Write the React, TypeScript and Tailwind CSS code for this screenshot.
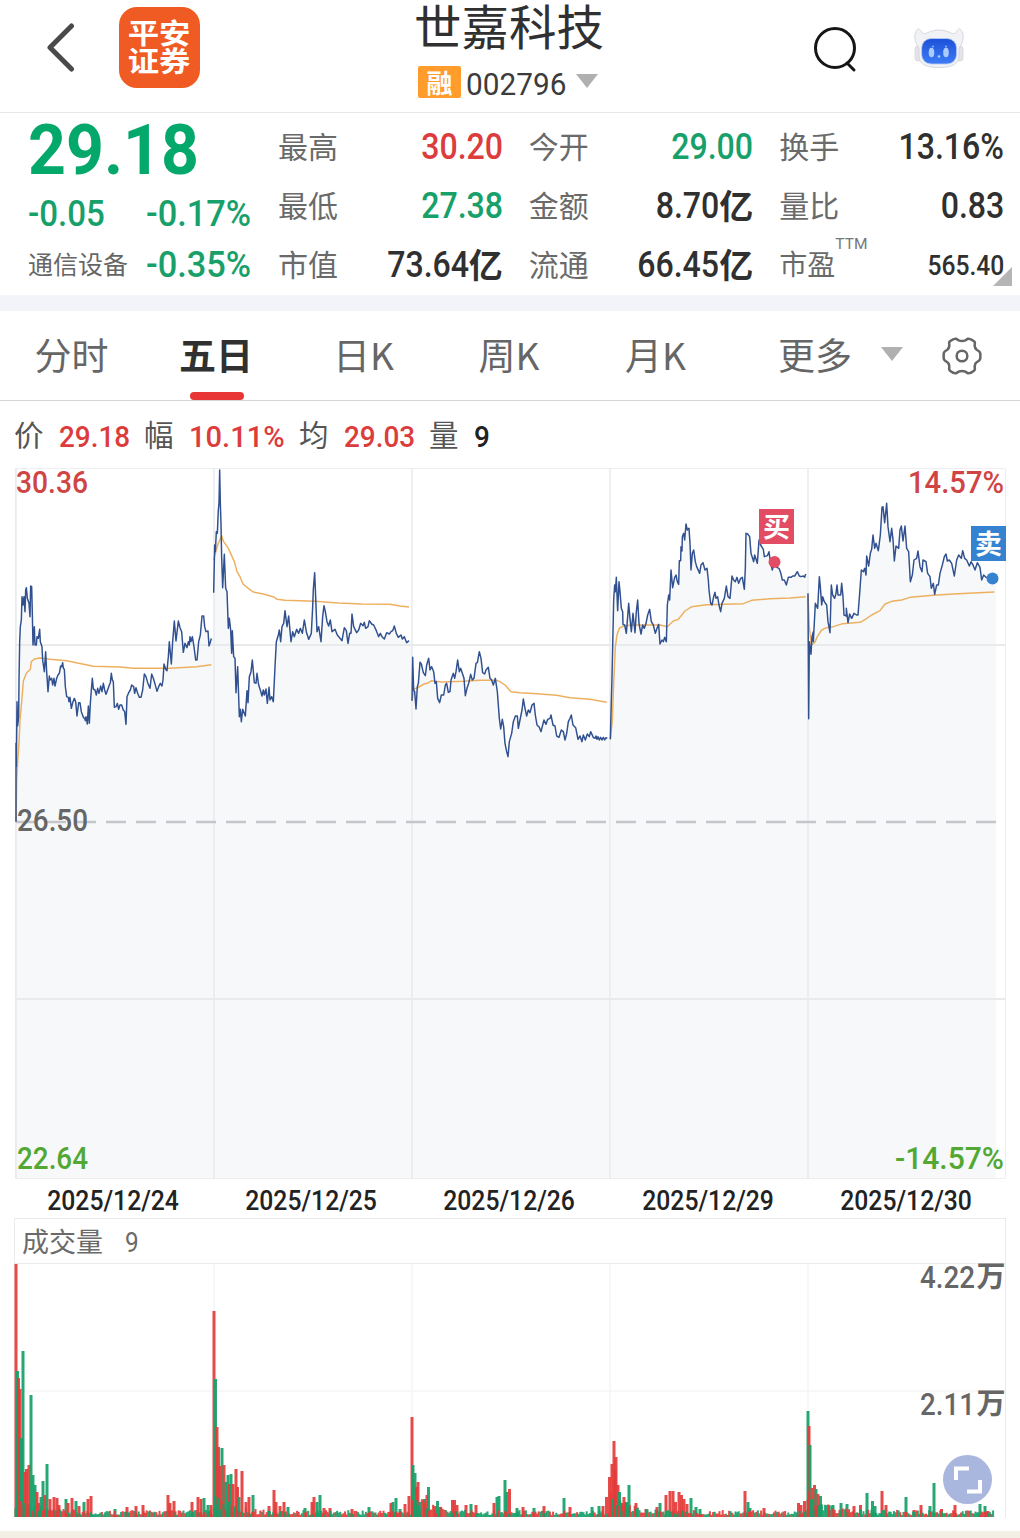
import clsx from 'clsx';

const CJK = "font-['Noto_Sans_CJK_SC',sans-serif]";
const NUM = "font-[Roboto,'Noto_Sans_CJK_SC',sans-serif]";

type Tone = 'red' | 'green' | 'dark';

const toneClass: Record<Tone, string> = {
  red: 'text-[#dc3c3c]',
  green: 'text-[#18a06b]',
  dark: 'text-[#303030]',
};

interface Stat {
  label: string;
  value: string;
  unit?: string;
  tone: Tone;
  small?: boolean;
  sup?: string;
}

const stats: Stat[] = [
  { label: '最高', value: '30.20', tone: 'red' },
  { label: '今开', value: '29.00', tone: 'green' },
  { label: '换手', value: '13.16%', tone: 'dark' },
  { label: '最低', value: '27.38', tone: 'green' },
  { label: '金额', value: '8.70', unit: '亿', tone: 'dark' },
  { label: '量比', value: '0.83', tone: 'dark' },
  { label: '市值', value: '73.64', unit: '亿', tone: 'dark' },
  { label: '流通', value: '66.45', unit: '亿', tone: 'dark' },
  { label: '市盈', value: '565.40', tone: 'dark', small: true, sup: 'TTM' },
];

// Points are in thirds of a pixel, relative to each day's own origin
const days = [
  {
    date: '2025/12/24',
    dx: 0,
    dy: -8,
    end: 642,
    price:
      '48,1085 48,850 49,920 51,725 53,797 56,770 57,660 59,545 61,500 64,480 66,410 69,435 72,410 75,455 77,390 79,383 82,415 87,430 90,470 92,378 95,380 97,460 99,555 103,500 105,555 109,555 111,530 115,535 119,508 121,545 126,560 128,600 133,635 137,575 140,635 144,695 148,648 150,660 155,655 158,675 162,655 165,678 170,655 174,645 178,640 182,618 185,620 188,608 190,625 193,628 196,680 200,710 205,712 207,725 210,712 214,745 219,725 223,715 227,725 231,768 236,728 240,728 244,755 250,772 254,775 256,782 258,770 262,792 265,738 268,790 271,730 274,690 277,655 280,687 285,690 289,705 293,685 297,700 302,678 306,695 310,670 314,690 318,703 322,692 328,675 331,668 334,640 337,660 340,665 343,742 348,740 352,730 356,748 360,735 365,735 370,750 374,755 378,793 381,710 386,698 391,690 395,675 401,680 404,700 408,683 413,700 418,712 423,712 428,690 433,642 438,650 443,668 450,685 455,642 460,655 464,668 471,694 476,680 481,670 486,678 489,660 492,612 497,628 501,632 505,590 508,545 514,612 518,545 523,483 528,543 535,483 540,503 545,515 550,577 555,550 561,563 565,545 568,555 570,530 573,545 577,530 582,560 587,600 591,600 596,545 601,525 606,468 611,468 614,500 618,515 624,513 627,558 630,550 634,535',
    avg: '48,1085 50,960 54,890 57,850 60,780 66,715 70,663 79,640 91,628 94,605 103,597 120,594 150,598 200,602 280,619 360,621 400,625 510,625 590,620 634,614',
  },
  {
    date: '2025/12/25',
    dx: 205,
    dy: -8,
    end: 621,
    price:
      '26,398 29,255 31,275 34,215 37,220 40,150 42,130 44,30 46,130 48,190 50,290 53,383 58,283 62,385 66,395 70,505 73,475 77,510 80,580 82,512 86,590 90,595 93,698 98,620 100,680 103,770 106,748 109,785 113,748 121,768 126,692 129,728 133,650 138,635 142,600 148,668 153,670 156,640 161,675 166,690 171,708 175,690 178,705 183,687 187,730 192,682 195,720 200,710 205,725 210,620 214,545 220,525 223,510 227,545 231,500 236,490 240,452 246,500 251,468 258,545 263,515 268,530 275,508 281,520 286,505 292,520 298,480 304,515 311,538 319,520 323,440 325,388 329,338 332,410 336,515 341,500 348,545 353,470 357,437 361,455 366,485 371,498 376,480 381,515 390,508 397,525 405,535 411,542 418,503 424,512 429,550 434,520 438,520 441,462 446,500 455,518 461,510 467,490 474,497 478,487 482,505 489,500 493,482 500,492 506,495 514,512 521,530 526,520 531,530 538,537 545,518 553,522 558,515 563,512 568,498 574,520 580,532 588,525 592,537 598,530 605,548 612,542',
    avg: '26,300 34,268 40,250 50,228 56,245 70,265 88,305 96,335 105,350 114,372 130,385 145,396 175,402 207,411 216,418 240,421 330,424 400,429 470,432 555,433 585,438 612,441',
  },
  {
    date: '2025/12/26',
    dx: 400,
    dy: 162,
    end: 630,
    price:
      '36,212 38,82 41,180 44,185 48,237 52,170 55,160 60,97 64,102 70,128 76,137 80,105 86,85 90,120 95,110 101,125 105,160 109,155 113,205 119,218 124,195 131,195 136,165 140,160 145,187 150,185 153,150 160,130 164,145 168,125 173,90 178,125 182,115 187,130 192,145 196,197 201,175 206,160 212,133 217,150 222,145 228,100 232,98 238,65 243,85 248,128 254,132 258,120 265,112 270,145 275,150 280,165 286,145 292,185 298,265 302,297 307,268 311,290 315,340 320,365 324,380 328,335 335,310 340,275 346,258 352,258 355,295 360,270 366,240 370,207 375,235 380,258 385,240 390,248 396,225 402,220 406,255 411,285 418,292 423,305 428,285 432,270 438,283 443,268 450,265 453,255 459,285 465,288 470,318 477,322 484,300 490,305 495,330 500,310 505,275 510,265 514,255 519,285 527,293 534,328 540,318 546,335 550,315 556,330 562,312 568,320 572,305 580,322 585,325 588,318 591,328 594,320 598,330 602,322 606,330 610,322 614,330 618,323 622,325',
    avg: '36,212 42,176 50,175 72,162 82,160 95,152 125,156 190,154 240,151 290,151 300,155 315,165 333,185 360,188 410,191 470,196 510,203 570,208 620,217',
  },
  {
    date: '2025/12/29',
    dx: 600,
    dy: 22,
    end: 624,
    price:
      '31,748 33,670 36,560 38,470 41,330 44,285 46,305 49,262 53,362 57,275 60,305 64,355 68,365 69,403 74,405 79,430 83,380 86,340 90,385 94,425 99,370 105,428 109,365 113,330 117,400 123,432 128,405 133,415 138,400 143,375 149,358 154,395 160,405 166,430 171,415 176,403 180,462 186,450 190,455 194,442 199,455 202,345 206,315 209,330 213,240 218,293 224,262 228,255 232,275 236,283 238,212 242,212 243,170 246,183 247,140 251,130 254,150 258,102 262,120 267,115 270,160 273,240 277,190 281,180 286,215 290,230 299,250 303,225 309,218 315,240 321,235 325,270 327,300 332,340 336,345 341,320 345,307 348,325 353,320 357,345 362,365 366,340 373,325 379,288 384,320 390,325 396,258 401,270 406,275 411,262 416,280 422,265 427,262 433,298 436,235 438,130 443,132 449,140 453,190 461,215 464,195 472,220 477,150 482,165 490,178 493,200 502,197 507,185 511,215 517,240 523,215 530,232 537,235 542,248 547,270 553,270 559,285 565,262 573,262 578,258 584,258 592,245 598,258 603,260 610,258 614,262 617,252',
    avg: '31,748 37,690 41,580 46,470 51,435 58,415 70,408 100,405 180,405 202,410 220,393 235,388 255,363 275,350 320,344 430,341 455,331 510,326 570,324 617,320',
  },
  {
    date: '2025/12/30',
    dx: 800,
    dy: 12,
    end: 588,
    price:
      '24,340 26,716 28,485 30,500 33,523 36,470 40,455 40,485 46,370 53,385 58,290 61,320 65,375 68,350 73,365 80,375 84,425 90,458 94,315 98,345 104,355 108,340 111,315 114,345 122,345 125,310 129,350 132,405 139,408 139,385 144,428 149,402 155,415 162,400 170,405 174,405 179,340 184,270 190,275 194,265 198,285 200,228 206,258 211,220 215,208 219,165 224,205 228,190 235,212 241,165 246,82 249,80 254,128 260,70 264,140 270,185 275,145 279,178 283,243 288,198 296,205 300,150 304,138 309,183 315,138 320,205 326,215 331,305 337,285 342,240 350,235 354,213 360,260 366,275 369,240 378,245 383,280 390,290 394,325 400,310 404,343 410,315 415,315 420,280 427,255 433,230 438,222 442,243 448,240 455,250 463,288 470,240 476,225 484,235 488,212 494,235 500,240 508,258 513,245 519,255 525,270 532,248 540,262 545,300 551,285 558,292 575,295',
    avg: '24,345 28,440 34,495 44,488 52,470 65,450 80,443 100,440 128,431 180,427 196,418 215,405 240,392 255,372 275,364 305,360 330,352 400,346 460,342 520,339 583,336',
  },
];

// [x, height, colour]
type Bar = [number, number, 'r' | 'g'];

const peaks: Bar[] = [
  [16, 253, 'r'], [17.5, 146, 'g'], [18.5, 139, 'r'], [20, 128, 'r'], [21.5, 79, 'g'], [23, 166, 'g'], [25, 45, 'r'], [26.5, 48, 'r'], [29, 52, 'r'], [31, 122, 'g'], [33, 42, 'g'], [35, 32, 'g'], [37, 25, 'r'], [38.5, 14, 'r'], [41, 20, 'g'], [43, 36, 'g'], [45, 22, 'r'], [47, 53, 'g'], [50, 18, 'r'], [54, 20, 'r'], [57, 19, 'r'], [59, 12, 'r'], [66, 18, 'g'], [68, 14, 'r'], [72, 19, 'r'], [76, 16, 'g'], [79, 11, 'r'], [84, 15, 'g'], [88, 18, 'r'], [91, 21, 'r'], [115, 8, 'g'], [127, 10, 'r'], [136, 11, 'r'], [143, 12, 'r'], [168, 22, 'r'], [170, 14, 'r'], [174, 16, 'r'], [192, 15, 'r'], [198, 20, 'r'], [201, 18, 'r'], [204, 19, 'g'], [208, 12, 'g'], [211, 12, 'r'],
  [214, 206, 'r'], [215.5, 138, 'g'], [217, 90, 'r'], [218.5, 70, 'r'], [222, 69, 'g'], [220, 51, 'r'], [224, 52, 'r'], [226, 35, 'g'], [228, 42, 'g'], [229.5, 33, 'r'], [231, 43, 'g'], [233, 33, 'r'], [236, 48, 'r'], [237.5, 30, 'r'], [239, 20, 'g'], [242, 46, 'r'], [246, 15, 'r'], [249, 20, 'r'], [253, 22, 'g'], [269, 11, 'r'], [274, 27, 'r'], [276, 15, 'r'], [280, 11, 'r'], [284, 15, 'r'], [288, 10, 'g'], [305, 9, 'g'], [312, 15, 'r'], [314, 20, 'r'], [317, 15, 'g'], [320, 22, 'g'], [324, 9, 'r'], [330, 9, 'r'], [352, 8, 'r'], [369, 10, 'g'], [391, 14, 'r'], [393, 15, 'g'], [396, 19, 'g'], [400, 8, 'g'], [405, 13, 'r'], [409, 21, 'r'],
  [412, 100, 'r'], [413, 52, 'g'], [415, 44, 'g'], [416.5, 30, 'r'], [418, 35, 'r'], [420, 15, 'g'], [424.5, 18, 'g'], [427, 22, 'r'], [428.5, 30, 'g'], [435, 11, 'r'], [437.5, 16, 'g'], [440, 10, 'g'], [452.5, 17, 'r'], [454.5, 17, 'r'], [457, 12, 'r'], [466, 12, 'r'], [471, 13, 'g'], [476, 12, 'r'], [494, 14, 'r'], [497, 20, 'g'], [499, 21, 'g'], [505, 37, 'g'], [507, 25, 'g'], [509.5, 28, 'r'], [517, 9, 'g'], [523, 10, 'r'], [534, 9, 'g'], [544, 11, 'r'], [564, 19, 'g'], [570, 10, 'r'], [592, 10, 'g'], [599, 11, 'g'], [603, 11, 'r'], [606.5, 20, 'r'],
  [609.5, 40, 'r'], [612, 53, 'r'], [614, 76, 'r'], [616, 60, 'r'], [615, 47, 'r'], [618, 32, 'r'], [619.5, 25, 'g'], [622, 14, 'r'], [624, 20, 'r'], [626.5, 15, 'g'], [629, 32, 'g'], [636, 14, 'r'], [646, 8, 'r'], [657, 10, 'r'], [660, 14, 'g'], [666, 22, 'r'], [670, 26, 'r'], [673, 26, 'r'], [675.5, 15, 'r'], [679, 25, 'r'], [681.5, 22, 'r'], [684, 18, 'r'], [687, 13, 'r'], [691, 19, 'g'], [696, 10, 'g'], [700, 8, 'g'], [745, 26, 'r'], [748, 15, 'g'], [750, 9, 'g'], [764, 9, 'r'], [798.5, 14, 'r'], [801, 12, 'r'], [804.5, 16, 'r'],
  [808, 106, 'g'], [809, 91, 'r'], [810, 72, 'g'], [812, 29, 'r'], [814.5, 32, 'r'], [816, 28, 'g'], [818, 23, 'r'], [820.5, 21, 'g'], [829, 12, 'g'], [833, 12, 'g'], [841, 14, 'g'], [847, 13, 'g'], [854, 11, 'r'], [860.5, 12, 'r'], [867, 24, 'g'], [872.5, 16, 'g'], [875, 11, 'g'], [882, 26, 'r'], [886, 12, 'r'], [906, 20, 'g'], [914, 7, 'r'], [921, 12, 'r'], [930, 11, 'g'], [934, 34, 'g'], [941.5, 8, 'r'], [955, 12, 'r'], [980, 13, 'g'], [985, 11, 'g'], [988, 6, 'r'],
];

// Low minute-by-minute turnover between the peaks
const baseBars: Bar[] = Array.from({ length: 612 }, (_, i) => {
  const x = 16 + i * 1.6;
  const n = Math.abs(Math.sin(i * 12.9898) * 43758.5453) % 1;
  const m = Math.abs(Math.sin(i * 78.233) * 12543.123) % 1;
  const sinceOpen = (x - 16) % 198;
  const h = 2 + n * 5 + 14 * Math.exp(-sinceOpen / 16) * (0.5 + n);
  return [x, h, m > 0.5 ? 'r' : 'g'] as Bar;
}).filter((b) => b[0] < 995);

const gridX = [214, 412, 610, 808];

function Logo() {
  return (
    <div className={clsx(CJK, 'ml-11 flex h-[81px] w-[81px] flex-col items-center justify-center rounded-[18px] bg-[#f05a23] pb-[3px] text-[28px] leading-[28px] font-bold text-white')}>
      <span className="scale-x-[1.12]">平安</span>
      <span className="scale-x-[1.12]">证券</span>
    </div>
  );
}

function Robot() {
  return (
    <svg className="h-[42px] w-[50px]" viewBox="0 0 50 42">
      <defs>
        <linearGradient id="visor" x1="0" y1="0" x2="0" y2="1">
          <stop offset="0" stopColor="#1c50d8" />
          <stop offset="1" stopColor="#3f7cf5" />
        </linearGradient>
      </defs>
      <rect x="1" y="18" width="7" height="15" rx="3" fill="#e6e3e8" stroke="#d2d0d8" strokeWidth="0.7" />
      <rect x="42" y="18" width="7" height="15" rx="3" fill="#e6e3e8" stroke="#d2d0d8" strokeWidth="0.7" />
      <path
        d="M5 20C1 15-1 7 3 2c1-2 3-1 4 1 1 3 3 3 6 2 8-4 16-4 24 0 3 1 5 1 6-2 1-2 3-3 4-1 4 5 2 13-2 18v8c0 8-7 11.500-20 11.500S5 36 5 28z"
        fill="#f1f2f6"
        stroke="#d3d5dd"
        strokeWidth="0.9"
      />
      <rect x="7.6" y="10.5" width="35" height="25.5" rx="9.5" fill="url(#visor)" stroke="#b9cdf7" strokeWidth="0.8" />
      <ellipse cx="17.5" cy="24.5" rx="2.8" ry="4.8" fill="#a9cbff" />
      <ellipse cx="32" cy="24.5" rx="2.8" ry="4.8" fill="#a9cbff" />
      <circle cx="19" cy="18.5" r="1" fill="#8eb4fb" />
      <circle cx="32" cy="18.5" r="1" fill="#8eb4fb" />
      <circle cx="25" cy="28.5" r="1.3" fill="#a9cbff" />
    </svg>
  );
}

function Gear() {
  return (
    <svg className="h-10 w-10" viewBox="-60 -60 120 120" fill="none" stroke="#666" strokeWidth="7.500" strokeLinejoin="round">
      <path d="M-10-47Q0-43 10-47L18-52Q25-53 36-44Q40-41 38-33Q38-22 45-18Q55-13 55-7V7Q55 13 45 18Q38 22 38 33Q40 41 36 44Q25 53 18 52L10 47Q0 43-10 47L-18 52Q-25 53-36 44Q-40 41-38 33Q-38 22-45 18Q-55 13-55 7V-7Q-55-13-45-18Q-38-22-38-33Q-40-41-36-44Q-25-53-18-52Z" />
      <circle r="16" />
    </svg>
  );
}

function Caret() {
  return (
    <svg className="h-[14px] w-[22px]" viewBox="0 0 22 14">
      <path d="M0 0h22L11 14z" fill="#b0b0b0" />
    </svg>
  );
}

function Header() {
  return (
    <div className="flex h-[113px] border-b border-[#e8e8e8]">
      <div className="flex w-[320px] items-center pt-[6px] pb-[24px] pl-[46px]">
        <svg className="mt-[2px] h-[50px] w-[29px]" viewBox="0 0 29 50" fill="none" stroke="#4a4a4a" strokeWidth="5" strokeLinecap="round" strokeLinejoin="round">
          <path d="M25.500 3L4 24.500L25.500 46" />
        </svg>
        <Logo />
      </div>
      <div className="flex w-[378px] flex-col items-center">
        <div className={clsx(CJK, 'h-[66px] text-[47.500px] leading-[49px] whitespace-nowrap text-[#303030]')}>世嘉科技</div>
        <div className="flex h-8 items-center pr-[2px]">
          <span className={clsx(CJK, 'flex h-8 w-[43px] items-center justify-center rounded-[2px] bg-[#ff9c2b] pb-px text-[26px] leading-none font-bold text-white')}>融</span>
          <span className={clsx(NUM, 'ml-[5px] w-[101px] origin-left scale-x-[0.96] pt-1 text-[31px] leading-none text-[#3c3c3c]')}>002796</span>
          <span className="ml-[9px] flex pb-[2px]">
            <Caret />
          </span>
        </div>
      </div>
      <div className="flex flex-1 items-start pt-[26px] pl-[115px]">
        <svg className="h-[48px] w-[46px]" viewBox="0 0 46 48" fill="none" stroke="#161616" strokeWidth="3" strokeLinecap="round">
          <circle cx="22" cy="22" r="19.500" />
          <path d="M34 37l7 7" />
        </svg>
        <div className="ml-[55px] pt-[2px]">
          <Robot />
        </div>
      </div>
    </div>
  );
}

function Quote() {
  return (
    <div className="relative flex h-[182px] pt-1">
      <div className={clsx(NUM, 'w-[278px] pl-7 font-medium')}>
        <div className="h-[66px] origin-left scale-x-[0.945] text-[70px] leading-[66px] font-bold text-[#05a86b]">29.18</div>
        <div className="flex h-[58px] items-center pt-1 text-[36px] leading-none text-[#18a06b]">
          <span className="w-[118px] origin-left scale-x-[0.92]">-0.05</span>
          <span className="origin-left scale-x-[0.955]">-0.17%</span>
        </div>
        <div className="flex h-[48px] items-center text-[36px] leading-none text-[#18a06b]">
          <span className={clsx(CJK, '-mt-[3px] w-[118px] text-[25px] font-normal whitespace-nowrap text-[#666]')}>通信设备</span>
          <span className="origin-left scale-x-[0.955]">-0.35%</span>
        </div>
      </div>
      <div className="grid h-[177px] w-[726px] grid-cols-3 gap-x-[26px]">
        {stats.map((s) => (
          <div key={s.label} className="flex h-[59px] items-center justify-between">
            <span className={clsx(CJK, 'flex pb-[3px] text-[30px] leading-none text-[#6a6a6a]')}>
              {s.sup ? <span className="text-[28px]">{s.label}</span> : s.label}
              {s.sup && <span className="-mt-[12px] font-[Roboto] text-[15.500px] leading-none text-[#777]">{s.sup}</span>}
            </span>
            <span className={clsx('flex items-center leading-none font-medium', toneClass[s.tone])}>
              <span className={clsx(NUM, 'origin-right scale-x-[0.88]', s.small ? 'pt-[3px] text-[28px]' : 'pt-[2px] text-[36.500px]')}>{s.value}</span>
              {s.unit && <span className={clsx(CJK, 'pb-[2px] text-[34px] font-bold')}>{s.unit}</span>}
            </span>
          </div>
        ))}
      </div>
      <svg className="absolute right-2 bottom-[9px] h-[19px] w-[19px]" viewBox="0 0 19 19">
        <path d="M19 0v19H0z" fill="#b5b5b5" />
      </svg>
    </div>
  );
}

function Tabs() {
  const tabs = [
    { name: '分时', width: 'w-[143px]' },
    { name: '五日', width: 'w-[146px]' },
    { name: '日K', width: 'w-[149px]' },
    { name: '周K', width: 'w-[142px]' },
    { name: '月K', width: 'w-[151px]' },
  ];
  return (
    <div className={clsx(CJK, 'flex h-[90px] items-stretch border-b border-[#d4d4d4] text-[37px] leading-none text-[#666]')}>
      {tabs.map((tab) => {
        const active = tab.name === '五日';
        return (
          <div key={tab.name} className={clsx('relative flex items-center justify-center pb-[3px]', tab.width, active && 'font-bold text-[#303030]')}>
            {tab.name}
            {active && <span className="absolute bottom-0 left-[47px] h-2 w-[54px] rounded-full bg-[#e83535]" />}
          </div>
        );
      })}
      <div className="flex w-[172px] items-center justify-end pb-[3px]">
        更多
        <span className="ml-[29px] flex">
          <Caret />
        </span>
      </div>
      <div className="ml-[39px] flex items-center">
        <Gear />
      </div>
    </div>
  );
}

function InfoRow() {
  const items = [
    { label: '价', value: '29.18', box: 'w-[130px]', squeeze: 'scale-x-[0.93]', red: true },
    { label: '幅', value: '10.11%', box: 'w-[155px]', squeeze: 'scale-x-[0.97]', red: true },
    { label: '均', value: '29.03', box: 'w-[130px]', squeeze: 'scale-x-[0.93]', red: true },
    { label: '量', value: '9', box: 'w-[80px]', squeeze: 'scale-x-[0.93]', red: false },
  ];
  return (
    <div className="flex h-[67px] items-center pl-[14px]">
      {items.map((item) => (
        <div key={item.label} className={clsx('flex items-center leading-none', item.box)}>
          <span className={clsx(CJK, 'mr-[15px] pb-px text-[29.500px] text-[#555]')}>{item.label}</span>
          <span className={clsx(NUM, 'origin-left pt-[5px] text-[30px] font-medium', item.squeeze, item.red ? 'text-[#dc3c3c]' : 'text-[#222]')}>{item.value}</span>
        </div>
      ))}
    </div>
  );
}

function Marker({ x, y, color, label }: { x: number; y: number; color: string; label: string }) {
  return (
    <g>
      <rect x={x} y={y} width="35" height="35" fill={color} />
      <text x={x + 17.5} y={y + 27.5} textAnchor="middle" fontSize="27" fontWeight="700" fill="#fff" className={CJK}>
        {label}
      </text>
    </g>
  );
}

function PriceChart() {
  return (
    <svg className="block h-[711px] w-[1020px] overflow-visible" viewBox="0 0 1020 711">
      {days.map((d) => {
        const scale = `translate(${d.dx} ${d.dy}) scale(0.33333)`;
        const first = d.price.split(',')[0];
        const floor = (711 - d.dy) * 3;
        return (
          <path key={d.date} transform={scale} d={`M${first},${floor} L${d.price} H${d.end} V${floor}Z`} fill="#f6f8fa" />
        );
      })}
      <g stroke="#e9eaec" strokeWidth="1.500">
        <path d="M15.500 .5H1005.500V710.500H15.500z" fill="none" stroke="#eeeeef" strokeWidth="1" />
        <path d="M15 177H1006M15 531H1006" strokeWidth="2" />
        {gridX.map((x) => (
          <path key={x} d={`M${x} 0V711`} />
        ))}
        <path d="M16 0V711" />
      </g>
      <path d="M16 354H996" stroke="#c4c6c9" strokeWidth="2.500" strokeDasharray="20 10" />
      {days.map((d) => (
        <g key={d.date} transform={`translate(${d.dx} ${d.dy}) scale(0.33333)`} fill="none" strokeLinejoin="round">
          <polyline points={d.avg} stroke="#edb060" strokeWidth="4.400" />
          <polyline points={d.price} stroke="#30508f" strokeWidth="4.400" />
        </g>
      ))}
      <Marker x={759} y={41} color="#e34d64" label="买" />
      <circle cx="774.500" cy="94" r="6" fill="#e34d64" />
      <Marker x={971} y={58} color="#3583d0" label="卖" />
      <circle cx="992.500" cy="110.500" r="6" fill="#3583d0" />
      <g className={NUM} fontSize="30.500" fontWeight="500">
        <text x="16" y="25" textLength="72" lengthAdjust="spacingAndGlyphs" fill="#d04444">30.36</text>
        <text x="908" y="25" textLength="96" lengthAdjust="spacingAndGlyphs" fill="#d04444">14.57%</text>
        <text x="17" y="363" textLength="71" lengthAdjust="spacingAndGlyphs" fill="#666">26.50</text>
        <text x="17" y="701" textLength="71" lengthAdjust="spacingAndGlyphs" fill="#52a832">22.64</text>
        <text x="895" y="701" textLength="109" lengthAdjust="spacingAndGlyphs" fill="#52a832">-14.57%</text>
      </g>
    </svg>
  );
}

function Volume() {
  return (
    <div className="relative mx-[14px] border border-[#ebebeb] border-b-transparent">
      <div className="flex h-[45px] items-center border-b border-[#ebebeb] pl-[7px] leading-none text-[#6a6a6a]">
        <span className={clsx(CJK, 'pb-px text-[27px]')}>成交量</span>
        <span className={clsx(NUM, 'ml-[22px] origin-left scale-x-[0.9] pt-1 text-[27px]')}>9</span>
      </div>
      <svg className="block h-[253px] w-[990px] overflow-visible" viewBox="15 0 990 253">
        <g stroke="#f5f5f6" strokeWidth="1.500">
          <path d="M15 127H1005" />
          {gridX.map((x) => (
            <path key={x} d={`M${x} 0V253`} />
          ))}
        </g>
        {[...peaks, ...baseBars].map(([x, h, c], i) => (
          <rect key={i} x={x - 1.5} y={253 - h} width={i < peaks.length ? 3 : 2} height={h} fill={c === 'r' ? '#e43b3a' : '#16a069'} fillOpacity={0.92} />
        ))}
        <g className={NUM} fontSize="31" fill="#666" fontWeight="500">
          <text x="920" y="24" textLength="55" lengthAdjust="spacingAndGlyphs">4.22</text>
          <text x="920" y="151" textLength="55" lengthAdjust="spacingAndGlyphs">2.11</text>
          <g className={CJK} fontSize="29" fontWeight="700">
            <text x="976.500" y="23">万</text>
            <text x="976.500" y="150">万</text>
          </g>
        </g>
      </svg>
      <div className="absolute right-[13px] bottom-[13px] flex h-[49px] w-[49px] items-center justify-center rounded-full bg-[#a9b6dd]">
        <svg className="h-7 w-7" viewBox="0 0 28 28" fill="none" stroke="#fff" strokeWidth="4">
          <path d="M2 14V2.500H15M26 14V25.500H13" />
        </svg>
      </div>
    </div>
  );
}

export default function App() {
  return (
    <div className="flex h-[1538px] w-[1020px] flex-col overflow-hidden bg-white">
      <Header />
      <Quote />
      <div className="h-4 bg-[#f2f4f9]" />
      <Tabs />
      <InfoRow />
      <PriceChart />
      <div className={clsx(NUM, 'grid h-[39px] grid-cols-5 pr-[15px] pl-[14px] text-[27px] leading-none font-medium text-[#222]')}>
        {days.map((d) => (
          <span key={d.date} className="flex scale-x-[0.915] items-center justify-center pt-[5px]">
            {d.date}
          </span>
        ))}
      </div>
      <Volume />
      <div className="mt-auto h-[7px] bg-[#f3efe4]" />
    </div>
  );
}
